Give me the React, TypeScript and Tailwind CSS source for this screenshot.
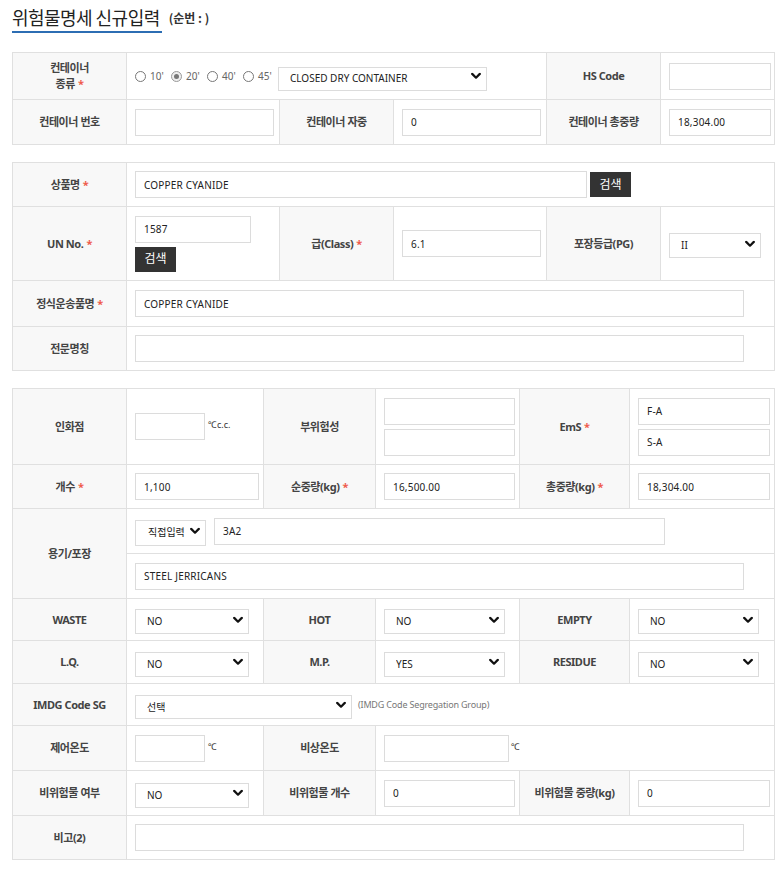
import React from 'react';

const Req = () => <span className="text-[#ef5b4c] ml-[3px]">*</span>;

const Th = ({ children, req, rowSpan, className = '' }: { children: React.ReactNode; req?: boolean; rowSpan?: number; className?: string }) => (
    <th rowSpan={rowSpan} className={`bg-[#f8f8f8] border border-[#e0e0e0] text-[11px] font-bold text-[#444] text-center align-middle tracking-[-0.04em] leading-[16px] ${className}`}>
        {children}
        {req && <Req />}
    </th>
);

const Td = ({ children, colSpan, className = '' }: { children?: React.ReactNode; colSpan?: number; className?: string }) => (
    <td colSpan={colSpan} className={`border border-[#e0e0e0] bg-white pl-[8px] align-middle ${className}`}>
        {children}
    </td>
);

const Input = ({ value = '', w, className = '' }: { value?: string; w: string; className?: string }) => (
    <input
        defaultValue={value}
        className={`h-[27px] border border-[#dcdcdc] bg-white px-[8px] text-[10px] text-[#222] tracking-[0.02em] outline-none block ${w} ${className}`}
    />
);

const Chevron = () => (
    <svg width="10" height="7" viewBox="0 0 10 7" className="absolute right-[6px] top-1/2 -translate-y-1/2 pointer-events-none">
        <path d="M1.2 1.4 L5 5.2 L8.8 1.4" fill="none" stroke="#111" strokeWidth="2.2" strokeLinecap="round" strokeLinejoin="round" />
    </svg>
);

const Select = ({ value, w, h = 'h-[25px]', pl = 'pl-[11px]' }: { value: string; w: string; h?: string; pl?: string }) => (
    <div className={`relative ${w} ${h} shrink-0`}>
        <select defaultValue={value} className={`appearance-none w-full h-full border border-[#dcdcdc] bg-white ${pl} pr-[18px] text-[10px] text-[#222] outline-none font-['Noto_Sans','Noto_Sans_CJK_KR',sans-serif]`}>
            <option>{value}</option>
        </select>
        <Chevron />
    </div>
);

const Radio = ({ label, checked }: { label: string; checked?: boolean }) => (
    <label className="flex items-center gap-[4px] w-[36px] shrink-0 text-[10px] text-[#666]">
        <span className={`w-[11px] h-[11px] rounded-full border flex items-center justify-center ${checked ? 'border-[#9a9a9a] bg-[#eee]' : 'border-[#777] bg-white'}`}>
            {checked && <span className="w-[5px] h-[5px] rounded-full bg-[#777]" />}
        </span>
        {label}
    </label>
);

const DarkButton = ({ className = '' }: { className?: string }) => (
    <button className={`h-[25px] w-[41px] bg-[#333] text-white text-[12px] ${className}`}>검색</button>
);

const Cols1 = () => (
    <colgroup>
        <col className="w-[114px]" />
        <col className="w-[153px]" />
        <col className="w-[114px]" />
        <col className="w-[153px]" />
        <col className="w-[114px]" />
        <col className="w-[114px]" />
    </colgroup>
);

export default function App() {
    return (
        <div className="w-[775px] min-h-[875px] bg-white font-['Noto_Sans','Noto_Sans_CJK_KR',sans-serif] text-[#333]">
            {/* 타이틀 */}
            <div className="pl-[12px] pt-[4px] flex items-end">
                <h2 className="inline-block border-b-2 border-[#2c6db3] pb-[1px] pr-[2px] text-[18px] leading-[26px] font-normal text-[#222] tracking-[-0.03em] font-['Noto_Sans_CJK_KR',sans-serif]">
                    위험물명세 신규입력
                </h2>
                <span className="ml-[7px] mb-[6px] text-[12px] font-bold text-[#333] font-['Noto_Sans_CJK_KR',sans-serif]">(순번 : )</span>
            </div>

            {/* 컨테이너 */}
            <table className="mt-[19px] ml-[12px] w-[762px] table-fixed border-collapse">
                <Cols1 />
                <tbody>
                    <tr className="h-[47px]">
                        <Th req>컨테이너<br />종류</Th>
                        <Td colSpan={3}>
                            <div className="flex items-center">
                                <div className="flex items-center w-[143px]">
                                    <Radio label="10'" />
                                    <Radio label="20'" checked />
                                    <Radio label="40'" />
                                    <Radio label="45'" />
                                </div>
                                <Select value="CLOSED DRY CONTAINER" w="w-[209px]" h="h-[24px]" />
                            </div>
                        </Td>
                        <Th>HS Code</Th>
                        <Td><Input w="w-[102px]" /></Td>
                    </tr>
                    <tr className="h-[45px]">
                        <Th>컨테이너 번호</Th>
                        <Td><Input w="w-[139px]" /></Td>
                        <Th>컨테이너 자중</Th>
                        <Td><Input value="0" w="w-[139px]" /></Td>
                        <Th>컨테이너 총중량</Th>
                        <Td><Input value="18,304.00" w="w-[102px]" /></Td>
                    </tr>
                </tbody>
            </table>

            {/* 상품 */}
            <table className="mt-[17px] ml-[12px] w-[762px] table-fixed border-collapse">
                <Cols1 />
                <tbody>
                    <tr className="h-[44px]">
                        <Th req>상품명</Th>
                        <Td colSpan={5}>
                            <div className="flex items-center gap-[3px]">
                                <Input value="COPPER CYANIDE" w="w-[452px]" />
                                <DarkButton />
                            </div>
                        </Td>
                    </tr>
                    <tr className="h-[74px]">
                        <Th req>UN No.</Th>
                        <Td>
                            <Input value="1587" w="w-[116px]" />
                            <DarkButton className="mt-[4px] block" />
                        </Td>
                        <Th req>급(Class)</Th>
                        <Td><Input value="6.1" w="w-[139px]" /></Td>
                        <Th>포장등급(PG)</Th>
                        <Td><Select value="II" w="w-[92px]" /></Td>
                    </tr>
                    <tr className="h-[46px]">
                        <Th req>정식운송품명</Th>
                        <Td colSpan={5}><Input value="COPPER CYANIDE" w="w-[609px]" /></Td>
                    </tr>
                    <tr className="h-[44px]">
                        <Th>전문명칭</Th>
                        <Td colSpan={5}><Input w="w-[609px]" /></Td>
                    </tr>
                </tbody>
            </table>

            {/* 상세 */}
            <table className="mt-[17px] ml-[12px] w-[762px] table-fixed border-collapse">
                <colgroup>
                    <col className="w-[114px]" />
                    <col className="w-[137px]" />
                    <col className="w-[112px]" />
                    <col className="w-[144px]" />
                    <col className="w-[110px]" />
                    <col className="w-[145px]" />
                </colgroup>
                <tbody>
                    <tr className="h-[76px]">
                        <Th>인화점</Th>
                        <Td>
                            <div className="flex items-center gap-[3px]">
                                <Input w="w-[70px]" />
                                <span className="text-[9px] text-[#333] -mt-[3px]">℃c.c.</span>
                            </div>
                        </Td>
                        <Th>부위험성</Th>
                        <Td>
                            <div className="flex flex-col gap-[4px]">
                                <Input w="w-[131px]" />
                                <Input w="w-[131px]" />
                            </div>
                        </Td>
                        <Th req>EmS</Th>
                        <Td>
                            <div className="flex flex-col gap-[4px]">
                                <Input value="F-A" w="w-[132px]" />
                                <Input value="S-A" w="w-[132px]" />
                            </div>
                        </Td>
                    </tr>
                    <tr className="h-[44px]">
                        <Th req>개수</Th>
                        <Td><Input value="1,100" w="w-[124px]" /></Td>
                        <Th req>순중량(kg)</Th>
                        <Td><Input value="16,500.00" w="w-[131px]" /></Td>
                        <Th req>총중량(kg)</Th>
                        <Td><Input value="18,304.00" w="w-[132px]" /></Td>
                    </tr>
                    <tr className="h-[45px]">
                        <Th rowSpan={2}>용기/포장</Th>
                        <Td colSpan={5}>
                            <div className="flex items-center gap-[8px]">
                                <Select value="직접입력" w="w-[71px]" h="h-[26px]" pl="pl-[12px]" />
                                <Input value="3A2" w="w-[451px]" />
                            </div>
                        </Td>
                    </tr>
                    <tr className="h-[45px]">
                        <Td colSpan={5}><Input value="STEEL JERRICANS" w="w-[609px]" /></Td>
                    </tr>
                    <tr className="h-[42px]">
                        <Th>WASTE</Th>
                        <Td><Select value="NO" w="w-[114px]" /></Td>
                        <Th>HOT</Th>
                        <Td><Select value="NO" w="w-[121px]" /></Td>
                        <Th>EMPTY</Th>
                        <Td><Select value="NO" w="w-[121px]" /></Td>
                    </tr>
                    <tr className="h-[43px]">
                        <Th>L.Q.</Th>
                        <Td><Select value="NO" w="w-[114px]" /></Td>
                        <Th>M.P.</Th>
                        <Td><Select value="YES" w="w-[121px]" /></Td>
                        <Th>RESIDUE</Th>
                        <Td><Select value="NO" w="w-[121px]" /></Td>
                    </tr>
                    <tr className="h-[42px]">
                        <Th>IMDG Code SG</Th>
                        <Td colSpan={5}>
                            <div className="flex items-center gap-[6px]">
                                <Select value="선택" w="w-[217px]" h="h-[24px]" />
                                <span className="text-[9px] text-[#777] tracking-[-0.02em]">(IMDG Code Segregation Group)</span>
                            </div>
                        </Td>
                    </tr>
                    <tr className="h-[45px]">
                        <Th>제어온도</Th>
                        <Td>
                            <div className="flex items-center gap-[3px]">
                                <Input w="w-[70px]" />
                                <span className="text-[9px] text-[#333] -mt-[3px]">℃</span>
                            </div>
                        </Td>
                        <Th>비상온도</Th>
                        <Td colSpan={3}>
                            <div className="flex items-center gap-[2px]">
                                <Input w="w-[125px]" />
                                <span className="text-[9px] text-[#333] -mt-[3px]">℃</span>
                            </div>
                        </Td>
                    </tr>
                    <tr className="h-[45px]">
                        <Th>비위험물 여부</Th>
                        <Td><Select value="NO" w="w-[114px]" /></Td>
                        <Th>비위험물 개수</Th>
                        <Td><Input value="0" w="w-[131px]" /></Td>
                        <Th>비위험물 중량(kg)</Th>
                        <Td><Input value="0" w="w-[132px]" /></Td>
                    </tr>
                    <tr className="h-[44px]">
                        <Th>비고(2)</Th>
                        <Td colSpan={5}><Input w="w-[609px]" /></Td>
                    </tr>
                </tbody>
            </table>
        </div>
    );
}
